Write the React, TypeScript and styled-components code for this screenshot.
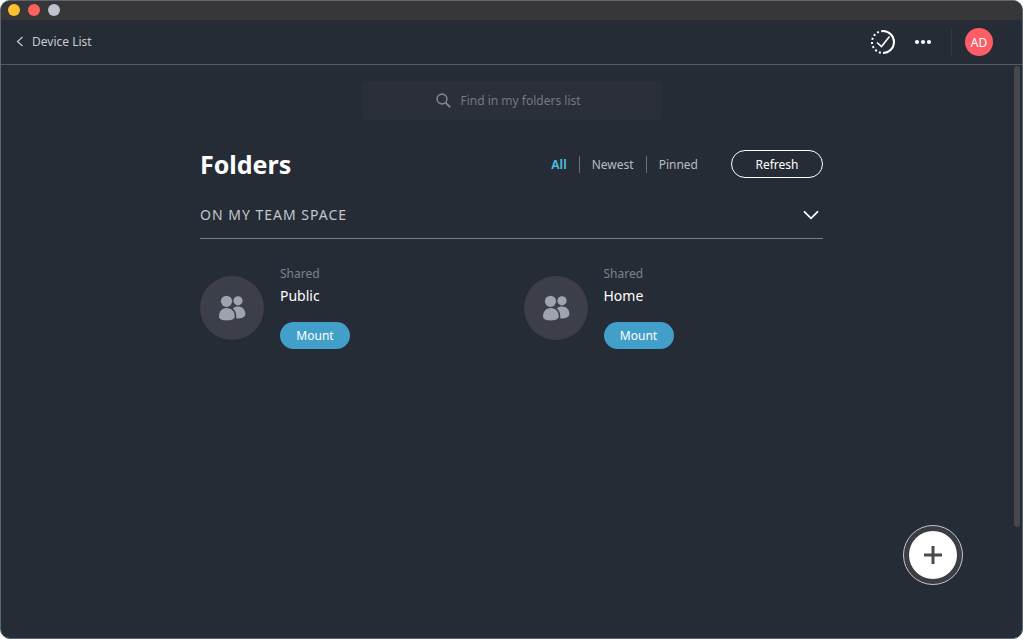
import React from "react";
import styled, { createGlobalStyle } from "styled-components";

const GlobalStyle = createGlobalStyle`
  *, *::before, *::after { box-sizing: border-box; }
  html, body, #root { height: 100%; }
  body {
    margin: 0;
    background: #ffffff;
    font-family: "Noto Sans", "Open Sans", sans-serif;
    font-size: 12px;
    line-height: 16px;
    color: #ffffff;
  }
  button, input { font: inherit; color: inherit; }
  button { border: 0; padding: 0; background: none; cursor: pointer; }
  h1, h2, h3, p, ul { margin: 0; padding: 0; }
  svg { display: block; }
`;

const Window = styled.div`
  position: relative;
  display: flex;
  flex-direction: column;
  min-height: 100%;
  overflow: hidden;
  border: 1px solid #5b6673;
  border-radius: 10px;
  background: #262c35;
`;

const TitleBar = styled.div`
  display: flex;
  align-items: center;
  gap: 8px;
  height: 19px;
  padding: 0 7px 1px;
  background: #373739;
`;

const WindowDot = styled.button<{ $color: string }>`
  width: 12px;
  height: 12px;
  border-radius: 50%;
  background: ${(p) => p.$color};
`;

const Header = styled.header`
  display: flex;
  align-items: center;
  justify-content: space-between;
  height: 45px;
  padding: 0 29px 0 14px;
  border-bottom: 1px solid #565c66;
`;

const BackLink = styled.a`
  display: flex;
  align-items: center;
  gap: 7px;
  color: #c6c9cf;
  text-decoration: none;
`;

const HeaderActions = styled.div`
  display: flex;
  align-items: center;
`;

const IconButton = styled.button`
  display: flex;
  align-items: center;
  justify-content: center;
  width: 40px;
  height: 28px;
`;

const CollapseButton = styled(IconButton)`
  width: 24px;
`;

const Avatar = styled.button`
  width: 28px;
  height: 28px;
  margin-left: 13px;
  padding-top: 1px;
  border-radius: 50%;
  background: #fc5d66;
`;

const HeaderDivider = styled.span`
  width: 1px;
  height: 28px;
  margin-left: 8px;
  background: #333943;
`;

const Body = styled.div`
  display: flex;
  flex: 1;
`;

const Main = styled.main`
  flex: 1;
  padding: 16px 191px 0 199px;
`;

const ScrollTrack = styled.div`
  width: 8px;
  padding: 1px 2px 0 0;
`;

const ScrollThumb = styled.div`
  height: 461px;
  border-radius: 3px;
  background: #46484d;
`;

const Search = styled.label`
  display: flex;
  align-items: center;
  gap: 10px;
  max-width: 300px;
  height: 39px;
  margin: 0 auto;
  padding-left: 74px;
  border-radius: 4px;
  background: #2b2f39;
  color: #7f838c;
`;

const SearchInput = styled.input`
  flex: 1;
  min-width: 0;
  padding: 0;
  border: 0;
  outline: 0;
  background: transparent;
  &::placeholder { color: #747882; opacity: 1; }
`;

const TitleRow = styled.div`
  display: flex;
  align-items: center;
  justify-content: space-between;
  margin-top: 28px;
`;

const Title = styled.h1`
  font-size: 25px;
  line-height: 32px;
  font-weight: 700;
`;

const Filters = styled.div`
  display: flex;
  align-items: center;
`;

const Filter = styled.button<{ $active?: boolean }>`
  padding: 1px 12px 0;
  color: ${(p) => (p.$active ? "#4cb5dd" : "#b9bcc3")};
  font-weight: ${(p) => (p.$active ? 700 : 400)};
  & + & { border-left: 1px solid #6b7079; }
`;

const RefreshButton = styled.button`
  width: 92px;
  height: 28px;
  margin-left: 21px;
  padding-top: 1px;
  border: 1px solid #ffffff;
  border-radius: 14px;
`;

const SectionHeader = styled.div`
  display: flex;
  align-items: center;
  justify-content: space-between;
  height: 48px;
  margin-top: 11px;
  border-bottom: 1px solid #7b8088;
`;

const SectionTitle = styled.h2`
  font-size: 14px;
  font-weight: 400;
  letter-spacing: 1px;
  color: #c3c6cc;
`;

const FolderGrid = styled.ul`
  display: grid;
  grid-template-columns: 1fr 1fr;
  gap: 24px;
  margin-top: 27px;
  list-style: none;
`;

const Folder = styled.li`
  display: flex;
  align-items: center;
  gap: 16px;
`;

const FolderIcon = styled.div`
  display: flex;
  align-items: center;
  justify-content: center;
  width: 64px;
  height: 64px;
  border-radius: 50%;
  background: #3c3e4a;
`;

const FolderInfo = styled.div`
  display: flex;
  flex-direction: column;
  align-items: flex-start;
`;

const FolderKind = styled.p`
  color: #7d818a;
`;

const FolderName = styled.h3`
  margin-top: 4px;
  font-size: 14px;
  line-height: 20px;
  font-weight: 400;
`;

const MountButton = styled.button`
  width: 70px;
  height: 27px;
  margin-top: 16px;
  padding-top: 1px;
  border-radius: 14px;
  background: #419fc9;
`;

const AddButton = styled.button`
  position: absolute;
  right: 59px;
  bottom: 53px;
  display: flex;
  align-items: center;
  justify-content: center;
  width: 60px;
  height: 60px;
  border: 1px solid #c4c7cb;
  border-radius: 50%;
  background: #3a3d43;
`;

const AddCircle = styled.span`
  display: flex;
  align-items: center;
  justify-content: center;
  width: 48px;
  height: 48px;
  border-radius: 50%;
  background: #ffffff;
`;

const ChevronLeft = () => (
  <svg width="10" height="12" viewBox="0 0 10 12" fill="none" stroke="#c6c9cf" strokeWidth="1.2">
    <path d="M7.500 1 2.500 5.500 7.500 10" />
  </svg>
);

const ChevronDown = () => (
  <svg width="16" height="10" viewBox="0 0 16 10" fill="none" stroke="#fff" strokeWidth="1.8" strokeLinecap="round">
    <path d="m1.500 1.800 6.500 6.500 6.500-6.500" />
  </svg>
);

const SyncIcon = () => (
  <svg width="26" height="26" viewBox="0 0 26 26" fill="none" stroke="#fff" strokeWidth="2">
    <path d="M13 2a11 11 0 0 1 0 22" />
    <path d="M13 24a11 11 0 0 1 0-22" strokeDasharray="2 2.32" strokeDashoffset="-2.2" />
    <path d="m7 13.500 4.500 4 8-10" strokeWidth="1.600" />
  </svg>
);

const MoreIcon = () => (
  <svg width="18" height="6" viewBox="0 0 18 6" fill="#fff">
    <circle cx="3" cy="3" r="2.1" />
    <circle cx="9" cy="3" r="2.1" />
    <circle cx="15" cy="3" r="2.1" />
  </svg>
);

const SearchIcon = () => (
  <svg width="15" height="15" viewBox="0 0 15 15" fill="none" stroke="currentColor">
    <circle cx="6" cy="6" r="4.900" strokeWidth="1.600" />
    <path d="m9.600 9.600 4.600 4.600" strokeWidth="2" />
  </svg>
);

const PeopleIcon = () => (
  <svg width="28" height="28" viewBox="0 0 28 28" fill="#9fa3af">
    <circle cx="8.500" cy="7.300" r="5.600" />
    <circle cx="20" cy="6.800" r="4.600" />
    <path d="M1 22.500c0-5 3-8.500 7.700-8.500s8 3.500 8 8.500c0 2.800-3.900 3.900-8 3.900S1 25.300 1 22.500z" />
    <path d="M14.800 14.200c1.400-1 3.200-1.600 5.200-1.600 4.600 0 7.400 3.300 7.400 7.400 0 3-3.600 4.600-9.100 4.600.3-4.300-.7-7.900-3.500-10.400z" />
  </svg>
);

const PlusIcon = () => (
  <svg width="18" height="18" viewBox="0 0 18 18" stroke="#4a4b4e" strokeWidth="3">
    <path d="M9 0v18M0 9h18" />
  </svg>
);

const folders = ["Public", "Home"];

export default function App() {
  return (
    <>
      <GlobalStyle />
      <Window>
        <TitleBar>
          <WindowDot $color="#fdc02f" aria-label="Minimize" />
          <WindowDot $color="#fb625c" aria-label="Close" />
          <WindowDot $color="#bfc1cf" aria-label="Zoom" />
        </TitleBar>
        <Header>
          <BackLink href="#devices">
            <ChevronLeft />
            Device List
          </BackLink>
          <HeaderActions>
            <IconButton aria-label="Sync status"><SyncIcon /></IconButton>
            <IconButton aria-label="More"><MoreIcon /></IconButton>
            <HeaderDivider />
            <Avatar aria-label="Account AD">AD</Avatar>
          </HeaderActions>
        </Header>
        <Body>
          <Main>
            <Search>
              <SearchIcon />
              <SearchInput type="text" aria-label="Find in my folders list" placeholder="Find in my folders list" />
            </Search>
            <TitleRow>
              <Title>Folders</Title>
              <Filters>
                <Filter $active aria-pressed="true">All</Filter>
                <Filter aria-pressed="false">Newest</Filter>
                <Filter aria-pressed="false">Pinned</Filter>
                <RefreshButton>Refresh</RefreshButton>
              </Filters>
            </TitleRow>
            <SectionHeader>
              <SectionTitle>ON MY TEAM SPACE</SectionTitle>
              <CollapseButton aria-label="Collapse section"><ChevronDown /></CollapseButton>
            </SectionHeader>
            <FolderGrid>
              {folders.map((name) => (
                <Folder key={name}>
                  <FolderIcon><PeopleIcon /></FolderIcon>
                  <FolderInfo>
                    <FolderKind>Shared</FolderKind>
                    <FolderName>{name}</FolderName>
                    <MountButton>Mount</MountButton>
                  </FolderInfo>
                </Folder>
              ))}
            </FolderGrid>
          </Main>
          <ScrollTrack><ScrollThumb /></ScrollTrack>
        </Body>
        <AddButton aria-label="Add folder">
          <AddCircle><PlusIcon /></AddCircle>
        </AddButton>
      </Window>
    </>
  );
}
